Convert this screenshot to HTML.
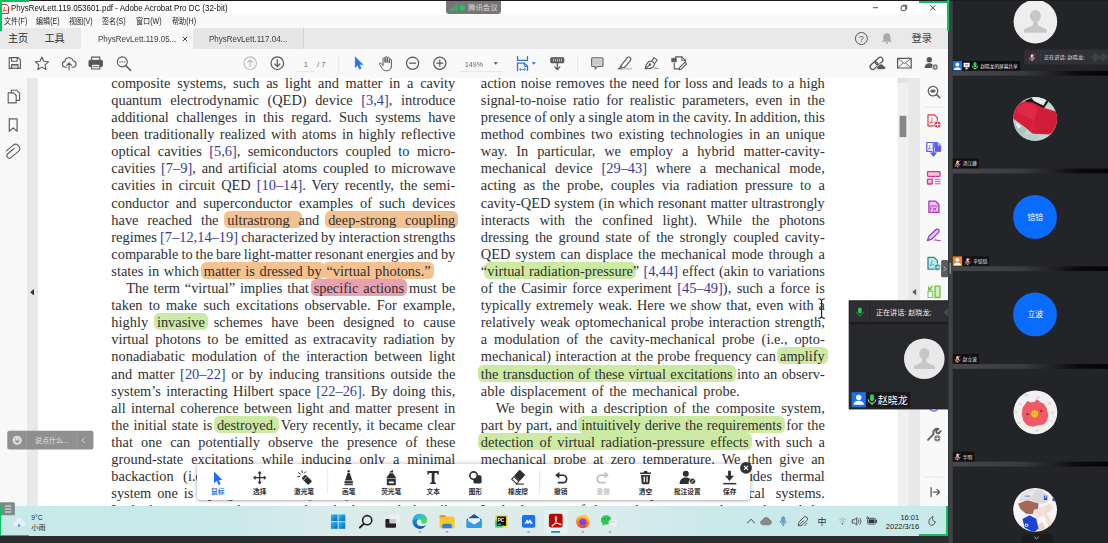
<!DOCTYPE html>
<html lang="zh"><head><meta charset="utf-8"><title>PhysRevLett.119.053601.pdf - Adobe Acrobat Pro DC (32-bit)</title>
<style>
*{box-sizing:border-box;margin:0;padding:0}
html,body{width:1108px;height:543px;overflow:hidden;background:#2b2c2f}
body{position:relative;font-family:"Liberation Sans","Noto Sans CJK SC",sans-serif;color:#222}
.abs{position:absolute}
#win{position:absolute;left:0;top:0;width:948px;height:543px;background:#fff;overflow:hidden}
#titlebar{position:absolute;left:0;top:1px;width:948px;height:27px;background:#fff}
#tabbar{position:absolute;left:0;top:28px;width:948px;height:21px;background:#e9e9e9}
#toolbar{position:absolute;left:0;top:49px;width:948px;height:29px;background:#f9f9f9}
#doc{position:absolute;left:0;top:78px;width:948px;height:429px;background:#e8e8e8;overflow:hidden}
#leftpane{position:absolute;left:0;top:0;width:27px;height:430px;background:#f8f8f8}
#page{position:absolute;left:38px;top:0;width:860px;height:430px;background:#fff}
#rightpane{position:absolute;left:919.5px;top:0;width:29px;height:430px;background:#f9f9f9}
#text{z-index:0;position:absolute;left:0;top:0;width:948px;height:506px;overflow:hidden;font-family:"Liberation Serif",serif;font-size:14.4px;color:#303030}
.ln{position:absolute;white-space:nowrap;line-height:17px;height:17px}
.ln .rf{color:#363a9a}
.h{position:relative;z-index:-1;border-radius:5.5px;padding:1.1px 3px 0;margin:0 -3px}
.ho{background:#f4c190}
.hg{background:#cdeaa4}
.hr{background:#e9a0b0}
#taskbar{position:absolute;left:0;top:506px;width:948px;height:29.500px;background:linear-gradient(90deg,#c8e9ea 0,#c9e9ea 24%,#dbebea 36%,#deeceb 50%,#dbebea 63%,#cae9ea 75%,#c8e9ea 100%)}
#bottom{position:absolute;left:0;top:535.500px;width:948.300px;height:8px;background:#2a2c2f}
#meet{position:absolute;left:950px;top:0;width:158px;height:543px;background:#2a2b2f}

#titlebar .ttl{position:absolute;left:10.6px;top:1.2px;transform-origin:0 50%;transform:scaleX(.866);font-size:9.2px;line-height:13px;color:#111;white-space:nowrap}
#menubar{position:absolute;left:0;top:14px;width:948px;height:14px;background:#f9f9f9;border-bottom:1px solid #e0e0e0}
#menubar span{position:absolute;top:0;transform-origin:0 50%;transform:scaleX(.855);font-size:8.3px;line-height:13px;color:#222;white-space:nowrap}
.topline{position:absolute;left:0;top:0;width:1108px;height:1px;background:#1d1d1f}
.g{background:#07c160;position:absolute}
#meetpill{position:absolute;left:446px;top:-.3px;width:55px;height:13.3px;background:#767676;border-radius:0 0 3px 3px}
#meetpill .t{position:absolute;left:22px;top:0;font-size:7.4px;line-height:13px;color:#d6d6d6;white-space:nowrap}
.wc{position:absolute;color:#333}
#tabbar .home{position:absolute;top:0;font-size:10.1px;line-height:21px;color:#2a2a2a}
#tab1{position:absolute;left:81px;top:0;width:112px;height:21px;background:#f9f9f9}
#tab2{position:absolute;left:193px;top:0;width:111px;height:21px;background:#e6e6e6;border-right:1px solid #d2d2d2}
.tabt{position:absolute;top:.7px;transform-origin:0 50%;transform:scaleX(.933);font-size:8.6px;line-height:21px;color:#3c3c3c;white-space:nowrap}
#login{position:absolute;left:911.5px;top:0;font-size:10.3px;line-height:21px;color:#444}
.tbt{position:absolute;top:8.500px;font-size:7.600px;line-height:13px;color:#666;white-space:nowrap}
</style></head><body>
<div id="win">
<div id="titlebar">
<svg class="abs" style="left:1px;top:2.5px" width="8" height="10" viewBox="0 0 8 10"><path d="M0.5 0.5h5l2 2v7h-7z" fill="#fff" stroke="#d4302b" stroke-width="1"/><path d="M1.8 7.2c1.2-1.5 1.8-3 1.8-4.2M1.8 7.2c1.5-.8 3-1 4.4-.8" stroke="#d4302b" stroke-width=".8" fill="none"/></svg>
<div class="ttl">PhysRevLett.119.053601.pdf - Adobe Acrobat Pro DC (32-bit)</div>
<div id="menubar"><span style="left:4.3px">文件(F)</span><span style="left:36.4px">编辑(E)</span><span style="left:69.3px">视图(V)</span><span style="left:102.2px">签名(S)</span><span style="left:135.6px">窗口(W)</span><span style="left:172.2px">帮助(H)</span></div>
<div id="meetpill"><svg class="abs" style="left:4px;top:3.2px" width="16" height="9" viewBox="0 0 16 9"><rect x=".3" y="4.700" width="1.700" height="2.500" fill="#1ec45c"/><rect x="2.800" y="3.200" width="1.700" height="4" fill="#1ec45c"/><rect x="5.300" y="1.300" width="1.900" height="5.900" fill="#1ec45c"/><circle cx="12" cy="4" r="2.800" fill="#1ec45c"/></svg><div class="t">腾讯会议</div></div>
<svg class="abs" style="left:870px;top:1px" width="70" height="12" viewBox="0 0 70 12"><path d="M3 5.7h5" stroke="#555" stroke-width="1"/><rect x="31.2" y="4" width="4.6" height="4.6" rx="1" fill="none" stroke="#444" stroke-width="1"/><path d="M32.5 3.2h4.2v4.2" fill="none" stroke="#444" stroke-width=".9"/><path d="M60.3 3.3l5 5M65.3 3.3l-5 5" stroke="#444" stroke-width="1"/></svg>
</div>
<div id="tabbar">
<div class="home" style="left:8px">主页</div><div class="home" style="left:44.5px">工具</div>
<div id="tab1"><div class="tabt" style="left:16.800px">PhysRevLett.119.05...</div><svg class="abs" style="left:101px;top:7.5px" width="6" height="6" viewBox="0 0 6 6"><path d="M.8.8l4.4 4.4M5.2.8L.8 5.2" stroke="#444" stroke-width="1"/></svg></div>
<div id="tab2"><div class="tabt" style="left:16px">PhysRevLett.117.04...</div></div>
<svg class="abs" style="left:853px;top:3px" width="42" height="16" viewBox="0 0 42 16"><circle cx="8.4" cy="7.5" r="6" fill="none" stroke="#555" stroke-width="1"/><text x="8.4" y="10.6" font-size="8.5" font-family="Liberation Sans, sans-serif" fill="#555" text-anchor="middle">?</text><path d="M33.9 2.2c-2.6 0-3.6 2-3.6 4.2v2.6l-1.3 1.8h9.8l-1.3-1.8V6.4c0-2.2-1-4.2-3.6-4.2z" fill="#aaa"/><circle cx="33.9" cy="12" r="1.1" fill="#aaa"/></svg>
<div id="login">登录</div>
</div>
<div id="toolbar"><svg class="abs" style="left:0;top:0" width="948" height="28" viewBox="0 49 948 28" fill="none" stroke="#585858" stroke-width="1.1" stroke-linejoin="round" stroke-linecap="round">
<!-- save -->
<path d="M9.2 57.6h9l2.2 2.2v8.6H9.2z"/><path d="M11.6 57.8v3.4h5.6v-3.4" /><path d="M11.6 68.2v-3.6h6.4v3.6" fill="#d0d0d0"/>
<!-- star -->
<path d="M41.9 57l1.9 4.3 4.7.5-3.5 3.1 1 4.6-4.1-2.4-4.1 2.4 1-4.6-3.5-3.100 4.7-.5z"/>
<!-- cloud upload -->
<path d="M66.300 67.2h-.8c-1.900 0-3.100-1.300-3.100-2.900 0-1.500 1.100-2.700 2.500-2.900.2-2.100 1.900-3.600 4.100-3.600 2 0 3.700 1.300 4.100 3.200 1.700.1 2.900 1.400 2.900 3 0 1.800-1.400 3.200-3.200 3.200h-.9"/><path d="M69.100 69.8v-6.600M66.700 65.300l2.400-2.400 2.400 2.400"/>
<!-- printer -->
<rect x="89" y="60.300" width="13.400" height="6.200" rx="1.200" fill="#585858"/><path d="M91.600 60v-2.900h8.200v2.900" /><rect x="91.600" y="64.200" width="8.200" height="4.800" fill="#f4f4f4"/><path d="M93.400 66.600h4.600" stroke-width=".8"/>
<!-- search -->
<circle cx="122.300" cy="61.900" r="5"/><path d="M126 65.700l4.600 4.700" stroke-width="1.500"/><path d="M120 61.900h.2M122.200 61.900h.2M124.400 61.900h.2" stroke-width="1.200"/>
<!-- up / down -->
<g stroke="#bdbdbd"><circle cx="250.200" cy="63.200" r="6.300"/><path d="M250.200 66.600v-6.600M247.600 62.400l2.600-2.600 2.600 2.600"/></g>
<g stroke-width="1.200"><circle cx="277.300" cy="63.200" r="6.300"/><path d="M277.300 59.800v6.600M274.700 64l2.600 2.600 2.600-2.600"/></g>
<!-- page number -->
<path d="M297 71.600h17.600" stroke="#e6e6e6" stroke-width="1"/>
<path d="M338.600 55v16.500M577.600 55v16.500" stroke="#e9e9e9" stroke-width="1"/>
<!-- cursor -->
<path d="M355.200 57.100v10.400l2.500-2.300 1.800 4 1.700-.8-1.800-3.900h3.400z" fill="#2873dc" stroke="#2873dc" stroke-width=".5"/>
<!-- hand -->
<path d="M383 65.200V58.800c0-1.400 2.100-1.400 2.100 0V62.600 57.600c0-1.400 2.100-1.400 2.100 0V62.600 58.200c0-1.400 2.100-1.400 2.100 0V63 60c0-1.400 2.100-1.400 2.100 0V66c0 3-1.800 4.800-4.700 4.800-2.200 0-3.400-.8-4.600-2.600l-2.500-3.800c-.7-1.100.7-2 1.500-1.100z" stroke-width="1"/>
<!-- minus / plus -->
<g stroke-width="1.200"><circle cx="412.600" cy="63.200" r="6.100"/><path d="M409.600 63.200h6"/><circle cx="439.800" cy="63.200" r="6.100"/><path d="M436.800 63.200h6M439.800 60.200v6"/></g>
<path d="M459 71.600h43.700" stroke="#e6e6e6" stroke-width="1"/>
<path d="M493.600 62.300h4.200l-2.100 2.500z" fill="#555" stroke="none"/>
<!-- fit page -->
<g stroke="#2a74d6" stroke-width="1.300"><path d="M517.500 56.400v4h10v-4"/><path d="M517.500 70.400v-7.300h6.800l3.200 3.200v4.100"/><path d="M524.300 63.100v3.200h3.200" stroke-width="1"/><path d="M519.600 69.500h5.800M520.600 68.500l-1 1 1 1M524.400 68.500l1 1-1 1" stroke-width=".8"/></g>
<path d="M531.600 62.300h4.400l-2.200 2.500z" fill="#2a74d6" stroke="none"/>
<!-- keyboard scroll -->
<rect x="550.800" y="57.700" width="13" height="4.900" rx="1" fill="#585858"/><path d="M553.400 59.100v2.100M555.400 59.100v2.100M557.400 59.100v2.100M559.400 59.100v2.100M561.400 59.100v2.100" stroke="#e8e8e8" stroke-width=".8"/><path d="M557.300 63v6.400M554.700 66.900l2.600 2.600 2.600-2.600" stroke-width="1.200"/>
<!-- comment -->
<path d="M592.600 57.700h9.400c.6 0 1 .4 1 1v6.800c0 .6-.4 1-1 1h-4.600l-2.300 2.700v-2.700h-2.500c-.6 0-1-.4-1-1v-6.800c0-.6.400-1 1-1z" fill="#d2d2d2" stroke="#666" stroke-width="1.100"/><path d="M594.500 61h6M594.500 63.200h6" stroke="#bdbdbd" stroke-width=".9"/>
<!-- highlighter -->
<path d="M620.600 66.100l6.600-8.200c.8-1 2.100-1.100 3-.3.900.8 1 2 .2 3l-6.600 7.700z" /><path d="M620.600 66.100l-1.600 2.400-1.200.4h3.600l2.400-.6" fill="#777" stroke="#666" stroke-width=".8"/><path d="M622.500 68.700h8.800" stroke="#c4c4c4" stroke-width="1.600"/>
<!-- sign pen -->
<path d="M645.200 68.700c.3-2.600 1.300-5.200 3.600-7.100l3.300-.6 2.500 3-1.300 3c-2.200 1.500-5 1.900-8.100 1.700z"/><path d="M645.400 68.500l4.300-3.600"/><circle cx="650" cy="64.600" r=".7"/><path d="M652 61l2.100-3.400 3.100 2.500-2.600 3.400"/><path d="M654.600 68.600c.6-1.200 1.200-1.200 1.500 0 .3-.8.800-.8 1.200 0h1" stroke-width=".7"/>
<!-- stamp -->
<path d="M675.500 58.200v-1.300h6.300l3.600 3.500v1.800"/><path d="M681.800 56.900v3.500h3.600" stroke-width=".9"/><rect x="671.800" y="58.300" width="4.600" height="3.600" fill="#585858" stroke-width=".6"/><path d="M674.300 63.300v5.600h4.400"/><path d="M679.600 67.600l5.400-5.400 1.600 1.600-5.400 5.400-2.100.5z"/>
<!-- link cloud -->
<g stroke-width="1.300" transform="rotate(-42 876.500 63.300)"><rect x="868.800" y="60.700" width="8.600" height="5.200" rx="2.600"/><rect x="875.600" y="60.700" width="8.600" height="5.200" rx="2.600"/></g>
<path d="M878.400 69.500c-1.200 0-1.900-.8-1.900-1.700 0-1 .8-1.700 1.700-1.800.3-1.300 1.300-2.100 2.700-2.100 1.300 0 2.400.8 2.700 2 1.200.1 2 .9 2 1.900 0 1-.8 1.700-2 1.700z" fill="#585858" stroke="#f9f9f9" stroke-width=".7"/>
<!-- mail -->
<rect x="897.600" y="58.400" width="13.600" height="9.600" stroke-width="1.200"/><path d="M897.800 58.600l6.600 5 6.600-5M897.800 67.800l5-4.600M911 67.800l-5-4.600" stroke-width=".8"/>
<!-- user plus -->
<circle cx="929.300" cy="59.800" r="2.700" fill="#585858" stroke="none"/><path d="M924.600 68c0-2.800 1.900-4.700 4.700-4.700 1.600 0 2.900.6 3.700 1.700l-.8 3z" fill="#585858" stroke="none"/><circle cx="935.200" cy="67.100" r="3" fill="#585858" stroke="#f9f9f9" stroke-width=".7"/><path d="M933.700 67.100h3M935.200 65.600v3" stroke="#f4f4f4" stroke-width=".8"/>
</svg>
<div class="tbt" style="left:303.800px">1</div><div class="tbt" style="left:317px">/ 7</div><div class="tbt" style="left:464.800px;transform-origin:0 50%;transform:scaleX(.92)">149%</div>
</div>
<div id="doc"><div id="leftpane"></div><div id="page"></div><div id="rightpane"></div></div>
<div id="text">
<div class="ln" style="left:111.3px;top:75.00px;word-spacing:3.140px">composite systems, such as light and matter in a cavity</div>
<div class="ln" style="left:111.3px;top:92.00px;word-spacing:4.944px">quantum electrodynamic (QED) device <span class="rf">[3,4]</span>, introduce</div>
<div class="ln" style="left:111.3px;top:109.00px;word-spacing:3.811px">additional challenges in this regard. Such systems have</div>
<div class="ln" style="left:111.3px;top:126.00px;word-spacing:1.930px">been traditionally realized with atoms in highly reflective</div>
<div class="ln" style="left:111.3px;top:143.00px;word-spacing:3.783px">optical cavities <span class="rf">[5,6]</span>, semiconductors coupled to micro-</div>
<div class="ln" style="left:111.3px;top:160.00px;word-spacing:2.217px">cavities <span class="rf">[7–9]</span>, and artificial atoms coupled to microwave</div>
<div class="ln" style="left:111.3px;top:177.00px;word-spacing:2.388px">cavities in circuit QED <span class="rf">[10–14]</span>. Very recently, the semi-</div>
<div class="ln" style="left:111.3px;top:195.00px;word-spacing:3.252px">conductor and superconductor examples of such devices</div>
<div class="ln" style="left:111.3px;top:212.00px;word-spacing:5.252px">have reached the <span class="h ho">ultrastrong </span>and <span class="h ho">deep-strong coupling</span></div>
<div class="ln" style="left:111.3px;top:229.00px;word-spacing:-0.415px">regimes <span class="rf">[7–12,14–19]</span> characterized by interaction strengths</div>
<div class="ln" style="left:111.3px;top:246.00px;word-spacing:-0.625px">comparable to the bare light-matter resonant energies and by</div>
<div class="ln" style="left:111.3px;top:263.00px;word-spacing:1.096px">states in which <span class="h ho">matter is dressed by</span> <span class="h ho">“virtual photons.”</span></div>
<div class="ln" style="left:126.3px;top:280.00px;word-spacing:1.262px">The term “virtual” implies that <span class="h hr">specific actions</span> must be</div>
<div class="ln" style="left:111.3px;top:297.00px;word-spacing:2.615px">taken to make such excitations observable. For example,</div>
<div class="ln" style="left:111.3px;top:314.00px;word-spacing:5.242px">highly <span class="h hg">invasive</span> schemes have been designed to cause</div>
<div class="ln" style="left:111.3px;top:331.00px;word-spacing:2.836px">virtual photons to be emitted as extracavity radiation by</div>
<div class="ln" style="left:111.3px;top:348.00px;word-spacing:2.983px">nonadiabatic modulation of the interaction between light</div>
<div class="ln" style="left:111.3px;top:366.00px;word-spacing:2.033px">and matter <span class="rf">[20–22]</span> or by inducing transitions outside the</div>
<div class="ln" style="left:111.3px;top:383.00px;word-spacing:1.693px">system’s interacting Hilbert space <span class="rf">[22–26]</span>. By doing this,</div>
<div class="ln" style="left:111.3px;top:400.00px;word-spacing:1.743px">all internal coherence between light and matter present in</div>
<div class="ln" style="left:111.3px;top:417.00px;word-spacing:1.015px">the initial state is <span class="h hg">destroyed.</span> Very recently, it became clear</div>
<div class="ln" style="left:111.3px;top:434.00px;word-spacing:4.640px">that one can potentially observe the presence of these</div>
<div class="ln" style="left:111.3px;top:451.00px;word-spacing:4.311px">ground-state excitations while inducing only a minimal</div>
<div class="ln" style="left:111.3px;top:468.00px;word-spacing:5.901px">backaction (i.e., a small change in the state) on the</div>
<div class="ln" style="left:111.3px;top:485.00px;word-spacing:2.265px">system one is trying to observe <span class="rf">[27,28]</span>. In this work we</div>
<div class="ln" style="left:111.3px;top:502.00px;word-spacing:0.510px">In the last two cases the proposed methods are rely heavily</div>
<div class="ln" style="left:480.8px;top:75.00px;word-spacing:1.154px">action noise removes the need for loss and leads to a high</div>
<div class="ln" style="left:480.8px;top:92.00px;word-spacing:3.132px">signal-to-noise ratio for realistic parameters, even in the</div>
<div class="ln" style="left:480.8px;top:109.00px;word-spacing:-0.289px">presence of only a single atom in the cavity. In addition, this</div>
<div class="ln" style="left:480.8px;top:126.00px;word-spacing:2.379px">method combines two existing technologies in an unique</div>
<div class="ln" style="left:480.8px;top:143.00px;word-spacing:5.274px">way. In particular, we employ a hybrid matter-cavity-</div>
<div class="ln" style="left:480.8px;top:160.00px;word-spacing:5.192px">mechanical device <span class="rf">[29–43]</span> where a mechanical mode,</div>
<div class="ln" style="left:480.8px;top:177.00px;word-spacing:3.590px">acting as the probe, couples via radiation pressure to a</div>
<div class="ln" style="left:480.8px;top:195.00px;word-spacing:0.447px">cavity-QED system (in which resonant matter ultrastrongly</div>
<div class="ln" style="left:480.8px;top:212.00px;word-spacing:6.248px">interacts with the confined light). While the photons</div>
<div class="ln" style="left:480.8px;top:229.00px;word-spacing:2.535px">dressing the ground state of the strongly coupled cavity-</div>
<div class="ln" style="left:480.8px;top:246.00px;word-spacing:1.539px">QED system can displace the mechanical mode through a</div>
<div class="ln" style="left:480.8px;top:263.00px;word-spacing:0.567px">“<span class="h hg">virtual radiation-pressure</span>” <span class="rf">[4,44]</span> effect (akin to variations</div>
<div class="ln" style="left:480.8px;top:280.00px;word-spacing:1.813px">of the Casimir force experiment <span class="rf">[45–49]</span>), such a force is</div>
<div class="ln" style="left:480.8px;top:297.00px;word-spacing:1.147px">typically extremely weak. Here we show that, even with a</div>
<div class="ln" style="left:480.8px;top:314.00px;word-spacing:1.187px">relatively weak optomechanical probe interaction strength,</div>
<div class="ln" style="left:480.8px;top:331.00px;word-spacing:3.245px">a modulation of the cavity-mechanical probe (i.e., opto-</div>
<div class="ln" style="left:480.8px;top:348.00px;word-spacing:0.566px">mechanical) interaction at the probe frequency can <span class="h hg">amplify</span></div>
<div class="ln" style="left:480.8px;top:366.00px;word-spacing:0.736px"><span class="h hg">the transduction of these virtual excitations</span> into an observ-</div>
<div class="ln" style="left:480.8px;top:383.00px;word-spacing:1.902px">able displacement of the mechanical probe.</div>
<div class="ln" style="left:495.8px;top:400.00px;word-spacing:2.653px">We begin with a description of the composite system,</div>
<div class="ln" style="left:480.8px;top:417.00px;word-spacing:0.657px">part by part, and <span class="h hg">intuitively derive the requirements</span> for the</div>
<div class="ln" style="left:480.8px;top:434.00px;word-spacing:2.312px"><span class="h hg">detection of virtual radiation-pressure effects</span> with such a</div>
<div class="ln" style="left:480.8px;top:451.00px;word-spacing:3.472px">mechanical probe at zero temperature. We then give an</div>
<div class="ln" style="left:480.8px;top:468.00px;word-spacing:5.240px">analysis of how the measured signal includes thermal</div>
<div class="ln" style="left:480.8px;top:485.00px;word-spacing:7.038px">noise in the matter, cavity and mechanical systems.</div>
<div class="ln" style="left:480.8px;top:502.00px;word-spacing:1.492px">In the last part of the work we present the results and the</div>
</div>
<svg class="abs" style="left:0;top:0" width="954" height="543" viewBox="0 0 954 543" fill="none" stroke="#5e5e5e" stroke-width="1.1" stroke-linejoin="round" stroke-linecap="round">
<!-- left pane icons -->
<path d="M11.400 92.800v-2.600h5.200l3 3v7.200h-3.400"/><path d="M8.200 92.900h5.400l2.600 2.600v7.400h-8z"/>
<path d="M9.300 118.900h7.800v12.300l-3.900-3.300-3.900 3.300z" stroke-width="1.200"/>
<g transform="rotate(-40 12.700 152.900)" stroke-width="1.100"><path d="M16.600 150.400h-8.200c-1.500 0-2.500 1.100-2.500 2.500s1 2.500 2.500 2.500h9.300c2.400 0 4.100-1.700 4.100-4.100s-1.700-4-4.100-4h-8.600"/></g>
<path d="M30.200 292.300l3.800-3.200v6.400z" fill="#333" stroke="none"/>
<!-- scrollbar -->
<rect x="897.600" y="78" width="10.900" height="428" fill="#f0f0f0" stroke="none"/>
<rect x="897.600" y="78" width="10.900" height="4.600" fill="#e2e2e2" stroke="none"/>
<rect x="899.600" y="115.800" width="6.700" height="21.300" fill="#858585" stroke="none"/>
<path d="M912.300 292.100l3.800-3.200v6.400z" fill="#555" stroke="none"/>
<!-- right pane -->
<circle cx="933" cy="91.100" r="4.800" stroke-width="1.200"/><path d="M936.500 94.600l3.300 3" stroke-width="1.500"/><path d="M930.300 91.100c1.600-1.900 3.800-1.900 5.400 0-1.600 1.900-3.800 1.900-5.400 0z" fill="#5e5e5e" stroke-width=".5"/>
<path d="M925.200 107h17.200M925.200 477.100h17.400" stroke="#e4e4e4" stroke-width="1"/>
<!-- red pdf plus -->
<g stroke="#d7373f"><path d="M928 114.800h6.400l3 3v8h-9.400z" stroke-width="1.200"/><path d="M930.400 123c1.200-1.500 1.800-3 1.800-4.600M930.400 123c1.500-.8 3-1 4.300-.8" stroke-width=".8"/><circle cx="937.500" cy="124.600" r="3.500" fill="#d7373f" stroke="#f9f9f9" stroke-width=".8"/><path d="M935.700 124.600h3.600M937.500 122.800v3.600" stroke="#fff" stroke-width="1"/></g>
<!-- export blue -->
<g stroke="#5c5ce0"><path d="M934.600 142.500h3.400l2.800 2.800v6h-6.200z" fill="#5c5ce0" stroke-width="1"/><path d="M938.200 142.300v2.800h2.800" stroke="#f9f9f9" stroke-width=".7"/><path d="M926.800 142.500h6.400v8.800h-6.400z" fill="#f9f9f9" stroke-width="1.200"/><path d="M928.600 149c.9-1.200 1.400-2.400 1.400-3.700M928.600 149c1.200-.6 2.300-.8 3.400-.6" stroke-width=".7"/><path d="M933.600 147.600v5.400" stroke="#f9f9f9" stroke-width="2.600" stroke-linecap="butt"/><path d="M933.600 147.800v5.400" stroke-width="1.400"/><path d="M930.600 152.800h6l-3 3.600z" fill="#5c5ce0" stroke-width=".6"/></g>
<!-- layout pink -->
<g stroke="#d83790" stroke-width="1.300"><rect x="927.500" y="171.700" width="12.500" height="4.600" rx=".8" fill="#f4c3dc"/><rect x="927.500" y="179.200" width="4.800" height="4.800" rx=".6" fill="#f4c3dc"/><path d="M935.400 179.400h4.800M935.400 181.600h4.800M935.400 183.800h4.800" stroke-width=".9"/></g>
<!-- purple doc -->
<g stroke="#b130bd" stroke-width="1.300"><path d="M928.900 201.100h6.600l3.400 3.400v7.800h-10z" fill="#ecc4f0"/><path d="M930.800 206h6.200M930.800 210v-2.300M933.200 208l2.800 2.400M936 208l-2.800 2.400" stroke-width="1"/></g>
<!-- purple pen -->
<g stroke="#8e3fd1" stroke-width="1.300"><path d="M927.400 240.600l1.600-4.300 6.800-6.600c.8-.8 2-.8 2.700 0 .7.800.7 1.900 0 2.700l-6.900 6.800z" fill="#e3cff5"/><path d="M934.400 240.600c.7-1.700 1.500-1.700 1.800 0 .4-1.200 1-1.200 1.500 0h2.600" stroke-width="1"/></g>
<!-- teal doc -->
<g stroke="#1d8f9c" stroke-width="1.300"><path d="M928 257.400h6.200l3.200 3.200v8.600h-9.400z" fill="#c4e6ea"/><path d="M930.200 265.400c1.200-1.500 1.800-3 1.800-4.600M930.200 265.400c1.400-.7 2.700-.9 3.900-.7" stroke-width=".7"/><circle cx="937.400" cy="267.200" r="3.300" fill="#1d8f9c" stroke="#f9f9f9" stroke-width=".7"/><path d="M935.600 267.200h3.400M937.800 265.900l1.300 1.300-1.300 1.300" stroke="#fff" stroke-width=".9"/></g>
<!-- collapse handle -->
<rect x="941.100" y="260.100" width="7.300" height="17.100" rx="1.500" fill="#5c5c5c" stroke="none"/><path d="M943.800 266.500l2.200 2.200-2.200 2.200" stroke="#bdbdbd" stroke-width="1"/>
<!-- green organize -->
<g stroke="#6fbf3b" stroke-width="1.300"><rect x="935" y="286.200" width="5" height="11.300" fill="#d5efc4"/><path d="M928 291.300h4.800v6.200h-4.800z" stroke-dasharray="1.400 1.100" stroke-width="1.100"/><path d="M932.400 286.300l-3.600 3.400M928.600 287v2.900h2.900" /></g>
<!-- purple circle -->
<circle cx="933.800" cy="407" r="4.200" stroke="#7a5af0" stroke-width="1.300"/>
<!-- wrench plus -->
<g><path d="M928 439.800l5.600-5.600c-.6-1.700-.2-3.300.9-4.400 1.100-1.100 2.600-1.400 3.900-.9l-2.300 2.300.5 1.800 1.800.5 2.300-2.300" stroke-width="1.800"/><circle cx="937.300" cy="438.400" r="3.300" fill="#5e5e5e" stroke="#f9f9f9" stroke-width=".7"/><path d="M935.600 438.400h3.400M937.300 436.700v3.400" stroke="#fff" stroke-width=".9"/></g>
<!-- arrow -->
<path d="M931.100 487.600v9M933 492.100h6.600M937 489.500l2.700 2.600-2.700 2.600" stroke-width="1.300"/>
</svg>

<div class="abs" style="left:196.500px;top:463.800px;width:553.500px;height:35.800px;background:#fff;border-radius:3px;box-shadow:0 0 5px rgba(0,0,0,.28),0 1px 2px rgba(0,0,0,.15)"></div>
<svg class="abs" style="left:190px;top:455px" width="570" height="52" viewBox="190 455 570 52" font-family="Liberation Sans, Noto Sans CJK SC, sans-serif" font-size="6.700" fill="#2e2f33" text-anchor="middle" font-weight="bold">
<!-- cursor -->
<path d="M214 471.600v11.600l2.700-2.400 2 4.300 2-.9-2-4.300h3.600z" fill="#1a6dff"/>
<text x="217.700" y="494.300" fill="#2f7de8">鼠标</text>
<!-- move -->
<g stroke="#2e2f33" stroke-width="1.300" fill="none"><path d="M259.700 472.600v10.200M254.600 477.700h10.200"/></g><path d="M259.700 471l2.200 2.600h-4.400zM259.700 484.400l2.200-2.600h-4.400zM253 477.700l2.600-2.200v4.400zM266.400 477.700l-2.600-2.200v4.400z"/>
<text x="259.700" y="494.300">选择</text>
<!-- laser -->
<g transform="rotate(-45 305.500 478.500)"><rect x="302.700" y="475.600" width="5.600" height="9.600" rx="1.200"/><path d="M302.700 478.200h5.600" stroke="#fff" stroke-width=".7"/></g>
<path d="M300.800 474.200l-2.600-1.600M302.400 473l-.6-2.600M300.200 476.300l-2.800.5M304.300 473.400l1.500-2" stroke="#2e2f33" stroke-width="1" fill="none"/>
<text x="304" y="494.300">激光笔</text>
<path d="M327.700 469.500v24.200M539.600 469.500v24.200" stroke="#e4e4e4" stroke-width=".9"/>
<!-- pen -->
<circle cx="348.700" cy="471.300" r="1.200"/><path d="M347.600 473h2.200l2.600 7.600h-7.400z"/><rect x="344.500" y="481.200" width="8.400" height="2.300"/><rect x="344.500" y="484.100" width="8.400" height="1.100"/>
<text x="348.700" y="494.300">画笔</text>
<!-- highlighter -->
<path d="M389.600 471.800l3.400-1.700v2.500h-3.400z"/><path d="M389.600 473.200h3.400l2.800 4v1.300h-9v-1.300z"/><path d="M386.800 479h9v6.300h-9zM388.800 481.400v1.900h5v-1.900z" fill-rule="evenodd"/>
<text x="391.200" y="494.300">荧光笔</text>
<!-- T -->
<path d="M427.400 471.100h11.400v3.400h-1.300l-.5-1.500h-2.500v9.300l1.500.4v1.200h-5.800v-1.200l1.500-.4v-9.300h-2.500l-.5 1.500h-1.300z"/>
<text x="433.200" y="494.300">文本</text>
<!-- shape -->
<rect x="473.400" y="475.300" width="8.200" height="8.100" rx="1.600"/><circle cx="473.600" cy="475.600" r="3.700" fill="#fff" stroke="#2e2f33" stroke-width="1.700"/>
<text x="475.500" y="494.300">图形</text>
<!-- eraser -->
<g transform="rotate(42 518.200 477)"><rect x="514.300" y="470.600" width="7.800" height="8.400" rx=".7"/><rect x="514.900" y="479.600" width="6.600" height="3.400" fill="#fff" stroke="#2e2f33" stroke-width="1.100"/></g><path d="M515.600 484.100h8.300" stroke="#2e2f33" stroke-width="1.100"/>
<text x="518" y="494.300">橡皮擦</text>
<!-- undo -->
<path d="M558.200 475.200h4.600c2.300 0 3.800 1.500 3.800 3.700s-1.500 3.700-3.800 3.700h-5" fill="none" stroke="#2e2f33" stroke-width="1.600"/><path d="M555.200 475.200l4.200-3.400v6.800z"/>
<text x="560.800" y="494.300">撤销</text>
<!-- redo -->
<g fill="#bdbdbd"><path d="M605.600 475.200h-4.600c-2.300 0-3.800 1.500-3.800 3.700s1.500 3.700 3.800 3.700h4.600" fill="none" stroke="#bdbdbd" stroke-width="1.600"/><path d="M608.800 475.200l-4.200-3.400v6.800z"/><text x="603.200" y="494.300" fill="#c4c4c4">重做</text></g>
<!-- trash -->
<path d="M640.200 472.400h3.400l.6-1.500h2.800l.6 1.500h3.400v1.700h-10.800z"/><path d="M641 474.900h9.200l-.7 8.200c-.1.700-.5 1.100-1.200 1.100h-5.400c-.7 0-1.100-.4-1.200-1.100zM643.600 476.600v5.600h1.300v-5.600zM646.400 476.600v5.600h1.300v-5.600z" fill-rule="evenodd"/>
<text x="645.500" y="494.300">清空</text>
<!-- person settings -->
<circle cx="685.800" cy="473.800" r="3"/><path d="M679.600 484c0-4.200 2.400-6.400 6.200-6.400 2 0 3.600.6 4.700 1.800-1.600 1-2.300 2.900-1.700 4.600z"/><circle cx="692.500" cy="481.200" r="2.900" stroke="#fff" stroke-width=".5"/><path d="M690.900 482.800l3.200-3.200" stroke="#fff" stroke-width=".9"/>
<text x="687.300" y="494.300">批注设置</text>
<!-- save -->
<path d="M728.100 470.800h2.800v5h3.100l-4.500 5.200-4.500-5.200h3.100z"/><rect x="723.200" y="482.900" width="13.100" height="1.500"/>
<text x="729.700" y="494.300">保存</text>
<!-- close -->
<circle cx="746" cy="467.900" r="5.900" fill="#303134"/><path d="M744 465.900l4 4M748 465.900l-4 4" stroke="#fff" stroke-width="1.200"/>
</svg>

<svg class="abs" style="left:0;top:0" width="950" height="543" viewBox="0 0 950 543" font-family="Liberation Sans, Noto Sans CJK SC, sans-serif">
<!-- chat pill -->
<rect x="7.300" y="430.800" width="86.100" height="18.800" rx="2" fill="#8b8b8b" fill-opacity=".96"/>
<circle cx="17.200" cy="440.300" r="4.600" fill="#dedede"/><path d="M14.600 440.600c.6 2.800 4.600 2.800 5.200 0z" fill="#8b8b8b"/><circle cx="15.600" cy="438.800" r=".6" fill="#8b8b8b"/><circle cx="18.800" cy="438.800" r=".6" fill="#8b8b8b"/>
<path d="M26.500 434v12.600M76.900 434v12.600" stroke="#a4a4a4" stroke-width=".7"/>
<text x="34.800" y="443" font-size="7.100" fill="#e2e2e2">说点什么...</text>
<path d="M84.800 437.600l-2.600 2.700 2.600 2.700" fill="none" stroke="#dcdcdc" stroke-width=".9"/>
<!-- speaker widget -->
<rect x="849.100" y="300.800" width="99.200" height="108.200" fill="#27282c"/>
<rect x="849.100" y="300.800" width="99.200" height="21.600" fill="#2d2e32"/>
<rect x="849.100" y="322.300" width="99.200" height="1.800" fill="#1a1b1d"/>
<rect x="849.100" y="300.800" width="99.200" height="108.200" fill="none" stroke="#1c1d1f" stroke-width=".8"/>
<path d="M869.900 301.500v20.500" stroke="#232427" stroke-width=".8"/>
<rect x="858.200" y="307.400" width="3.400" height="6" rx="1.700" fill="#2fcf4e"/><path d="M856.600 311.800c0 4.400 6.600 4.400 6.600 0M859.900 315.200v1.600" stroke="#3a8f4c" stroke-width=".9" fill="none"/>
<text x="875.900" y="315" font-size="7.100" fill="#f0f0f0">正在讲话: 赵晓龙;</text>
<path d="M948.300 307.600l-4.600 4.600 4.600 4.600z" fill="#4a4b50"/>
<circle cx="924.300" cy="358.700" r="20.300" fill="#e9e9e9"/>
<g fill="#c7c7c7" transform="translate(924.300 358.700) scale(.93) translate(-1035.400 -21.600)"><ellipse cx="1035.400" cy="16.100" rx="5.500" ry="6"/><path d="M1023.800 31.600c0-1.600.8-2.600 2.400-3.300l5.600-2.400c1-.5 1.300-1.200 1.300-2.400v-2h4.600v2c0 1.200.3 1.900 1.300 2.400l5.600 2.400c1.600.7 2.400 1.700 2.400 3.300 0 .7-.4 1.100-1.100 1.100h-21c-.7 0-1.100-.4-1.100-1.100z"/></g>
<rect x="851.500" y="392.200" width="58.600" height="15.100" fill="#1a1a1c"/>
<rect x="851.500" y="392.200" width="14.400" height="15.100" fill="#1a73e8"/>
<circle cx="858.700" cy="397.400" r="2.700" fill="#fff"/><path d="M853.600 404.800c0-5.400 10.200-5.400 10.200 0z" fill="#fff"/>
<rect x="870" y="394.200" width="4" height="7" rx="2" fill="#2fcf4e"/><path d="M868.200 399.400c0 5 7.600 5 7.600 0M872 403.200v1.800" stroke="#b8e8c0" stroke-width="1" fill="none"/>
<text x="877.800" y="403.500" font-size="10" fill="#fff">赵晓龙</text>
<!-- I-beam cursor -->
<path d="M690.400 305v25" stroke="#b0b0b0" stroke-width=".6"/>
<path d="M818.400 298.800c1.700 0 2.700.6 3.200 1.600.5-1 1.500-1.600 3.200-1.600M818.400 318.400c1.700 0 2.700-.6 3.200-1.600.5 1 1.500 1.600 3.200 1.600M821.600 300.200v16.800" fill="none" stroke="#111" stroke-width="1.100"/>
</svg>

<div id="taskbar"></div>
<svg class="abs" style="left:0;top:500px" width="948" height="43" viewBox="0 500 948 43" font-family="Liberation Sans, Noto Sans CJK SC, sans-serif">
<defs>
<linearGradient id="wing" x1="0" y1="0" x2="1" y2="1"><stop offset="0" stop-color="#2cc0f8"/><stop offset="1" stop-color="#0a64c8"/></linearGradient>
<linearGradient id="ffg" x1="0" y1="0" x2="0" y2="1"><stop offset="0" stop-color="#ffd43a"/><stop offset=".5" stop-color="#ff8a16"/><stop offset="1" stop-color="#f0393f"/></linearGradient>
<linearGradient id="edg" x1="0" y1="0" x2="1" y2="1"><stop offset="0" stop-color="#1f8ee0"/><stop offset="1" stop-color="#0b479a"/></linearGradient><linearGradient id="edt" x1="0" y1="0" x2="1" y2=".6"><stop offset="0" stop-color="#1f9fe0"/><stop offset=".5" stop-color="#2cc3c8"/><stop offset="1" stop-color="#58d855"/></linearGradient>
</defs>
<!-- bottom-left tab -->
<rect x="-2" y="502.300" width="16.900" height="12.900" rx="1.500" fill="#7e8b8d"/>
<path d="M5 506h6.200M5 509h6.200M5 512h6.200" stroke="#e6ecec" stroke-width="1"/>
<!-- weather -->
<path d="M15.600 526.400c-1.700 0-2.900-1.100-2.900-2.600 0-1.400 1-2.400 2.400-2.600.4-2 2-3.400 4.100-3.400 2 0 3.600 1.200 4.100 3 1.300.2 2.200 1.300 2.200 2.700 0 1.600-1.200 2.900-2.900 2.900z" fill="#e6f0f8" stroke="#c4d8e6" stroke-width=".4"/>
<path d="M19 523.400c.9 1.200 1.200 1.800 1.200 2.300 0 .7-.5 1.200-1.200 1.200s-1.200-.5-1.200-1.200c0-.5.300-1.100 1.200-2.300z" fill="#3a9af0"/>
<text x="31.300" y="519.600" font-size="7.600" fill="#222" textLength="11.400" lengthAdjust="spacingAndGlyphs">9°C</text>
<text x="31.300" y="530" font-size="7.200" fill="#222">小雨</text>
<!-- windows -->
<g fill="url(#wing)"><rect x="330.900" y="514.500" width="6.700" height="6.700"/><rect x="338.500" y="514.500" width="6.700" height="6.700"/><rect x="330.900" y="522.100" width="6.700" height="6.700"/><rect x="338.500" y="522.100" width="6.700" height="6.700"/></g>
<!-- search -->
<circle cx="367.200" cy="520.200" r="4.600" fill="none" stroke="#222" stroke-width="1.600"/><path d="M363.800 523.800l-3.900 3.700" stroke="#222" stroke-width="1.900" stroke-linecap="round"/>
<!-- task view -->
<rect x="385.400" y="519" width="10.600" height="8.700" rx="1" fill="#222"/><rect x="389.300" y="514.400" width="10.500" height="9" rx="1" fill="#f0f0f0" fill-opacity=".82"/>
<!-- edge -->
<g transform="translate(405 508) scale(.054140)">
<path d="M138 250C135 170 195 105 275 105 360 105 415 165 410 230 407 272 375 295 335 292 305 288 295 268 305 248 312 232 300 212 268 212 235 212 212 238 214 268z" fill="url(#edt)"/>
<path d="M138 250C150 215 195 200 235 212 215 232 210 262 224 295 245 335 300 352 385 318 360 365 310 390 262 385 190 378 140 320 138 250z" fill="url(#edg)"/>
</g>
<!-- explorer -->
<path d="M439.600 516.400c0-.8.500-1.400 1.300-1.400h3.800l1.400 1.500h7.100c.8 0 1.300.6 1.300 1.400v9c0 .8-.5 1.300-1.300 1.300h-12.300c-.8 0-1.300-.5-1.300-1.300z" fill="#f8c62e"/><path d="M439.600 516.400c0-.8.500-1.400 1.300-1.400h3.800l1.400 1.500-1.200 1h-5.300z" fill="#e59d1e"/><path d="M442.200 528.200v-2.400c0-1.200.8-2 2-2h5.600c1.200 0 2 .8 2 2v2.400z" fill="#2c7ed6"/>
<!-- mail -->
<path d="M466.600 519.600l7.500-5.400 7.500 5.400v7.100c0 .6-.4 1-1 1h-13c-.6 0-1-.4-1-1z" fill="#1f8fe6"/><path d="M466.600 519.600l7.500-5.400 7.500 5.400-7.500 4.200z" fill="#0d55aa"/><path d="M468 518.200h12.200v3l-6.100 3.600-6.100-3.600z" fill="#eaf4fc"/><path d="M466.600 520l7.500 4.700 7.500-4.700v6.700c0 .6-.4 1-1 1h-13c-.6 0-1-.4-1-1z" fill="#2a9df0"/>
<!-- pycharm -->
<rect x="495.200" y="514.900" width="12.600" height="12.600" fill="#e6ea3c"/><path d="M495.200 527.500v-8l8 8z" fill="#34d27a"/><rect x="496.900" y="516.500" width="9.200" height="9.200" fill="#0c0c0c"/><text x="497.700" y="521.600" font-size="4.600" font-weight="bold" fill="#fff">PC</text><path d="M497.900 524.200h3.200" stroke="#fff" stroke-width=".7"/>
<!-- tencent meeting -->
<rect x="521.900" y="514.900" width="13.300" height="12.800" rx="2" fill="#1a72f2"/><path d="M524.400 523.800l2.600-4.200 1.400 1.700 1.300-2 3.200 4.500h-2.400l-1-1.500-.9 1.500h-1.700l-.7-1.200-.7 1.200z" fill="#fff"/>
<!-- acrobat -->
<rect x="544.300" y="510.100" width="23.100" height="23.100" rx="2.500" fill="#e6f3f4" fill-opacity=".85"/>
<rect x="548.900" y="513.700" width="13.700" height="13.700" rx="2.200" fill="#b30b00"/>
<path d="M555.800 516.300c-.9.100-.8 2.500.2 4.600 1 2 3 3.700 4.700 4.100.9.200 1-.7.100-1.100-2.900-1.100-6.900-.3-8.700 1.400-.7.700.1 1.300.8.600 1.600-1.700 3-4.100 3.600-6.400.5-1.900.2-3.300-.7-3.200z" fill="none" stroke="#fff" stroke-width=".9" stroke-linejoin="round"/>
<rect x="551" y="531" width="9.100" height="1.800" rx=".9" fill="#1f8a9c"/>
<!-- firefox -->
<circle cx="582.800" cy="521.600" r="6.700" fill="url(#ffg)"/><path d="M578 515.800c.8.200 1.300.8 1.500 1.400 1-.9 2.400-1.300 3.700-1.100 1.300-1.700 3.300-1.600 3.300-1.600-.4.900-.2 1.800.5 2.600 1.600 1.400 2.500 3.200 2.500 4.900" fill="#ffc22e"/><circle cx="582.900" cy="521.600" r="3.600" fill="#7a3fe8"/><path d="M579.600 520c.8-1.100 2-1.700 3.200-1.700 2.200 0 3.800 1.600 3.800 3.600" fill="none" stroke="#ff7139" stroke-width="1.200"/>
<!-- wechat -->
<ellipse cx="606.200" cy="520" rx="5.400" ry="4.700" fill="#2dc84e"/><path d="M603 523.600l-.8 2.400 2.800-1.400z" fill="#2dc84e"/><ellipse cx="612.900" cy="522.600" rx="4.300" ry="3.700" fill="#eef2ee"/><path d="M615 525.600l.8 1.800-2.400-1.100z" fill="#eef2ee"/><circle cx="604.400" cy="518.800" r=".7" fill="#1a9a38"/><circle cx="608" cy="518.800" r=".7" fill="#1a9a38"/><circle cx="611.600" cy="521.800" r=".55" fill="#999"/><circle cx="614.300" cy="521.800" r=".55" fill="#999"/>
<!-- indicators -->
<g fill="#8a9698"><rect x="418.600" y="531.200" width="2.700" height="1.300" rx=".6"/><rect x="445.700" y="531.200" width="2.700" height="1.300" rx=".6"/><rect x="527.200" y="531.200" width="2.700" height="1.300" rx=".6"/><rect x="581.500" y="531.200" width="2.700" height="1.300" rx=".6"/><rect x="608.700" y="531.200" width="2.700" height="1.300" rx=".6"/></g>
<!-- tray -->
<g fill="none" stroke="#444" stroke-width="1" stroke-linecap="round" stroke-linejoin="round">
<path d="M747.400 523l3.600-3.800 3.600 3.800"/>
<path d="M763 524.800c-1.400 0-2.400-.9-2.400-2.200 0-1.200.9-2.100 2.100-2.200.4-1.700 1.700-2.800 3.500-2.800 1.700 0 3 1 3.400 2.500 1.100.2 1.800 1 1.800 2.200 0 1.400-1 2.500-2.400 2.500z" fill="#8a8a8a" stroke="#6a6a6a" stroke-width=".7"/>
<rect x="781.700" y="516.800" width="3" height="5.800" rx="1.500" fill="#6aa2c8" stroke="#4a86b0" stroke-width=".7"/><path d="M780.200 521.200c0 4 6 4 6 0M783.200 524.300v1.800" stroke="#4a86b0" stroke-width=".9"/>
<path d="M798.600 525.600c-.6-1.700-.1-3 1.100-4.300l3.900-3.900c1-1 2.400-1 3.300-.1.900.9.800 2.200-.1 3.200l-4 4c-1.200 1.200-2.600 1.600-4.200 1.100z" stroke-width="1"/><path d="M799.800 524.400l3.600-3.600M804.600 525.400c.8-.3 1.500-.9 2.300-2" stroke-width=".9"/>
<path d="M839.300 520.100c1.900-1.900 4.500-1.900 6.400 0M840.600 521.800c1.100-1.100 2.700-1.100 3.800 0" stroke="#9aa4a6" stroke-width=".9"/><circle cx="842.500" cy="523.800" r=".8" fill="#555" stroke="none"/>
<path d="M852.600 519.800h1.800l2.400-2.100v7.400l-2.400-2.100h-1.800z" stroke-width=".9"/><path d="M858.200 519.600c.8.900.8 2.700 0 3.600M859.800 518.200c1.500 1.700 1.500 4.700 0 6.400" stroke-width=".8"/>
<rect x="867.600" y="518.300" width="8" height="5.800" rx="1" stroke-width=".9"/><rect x="868.700" y="519.400" width="5.800" height="3.600" fill="#333" stroke="none"/><path d="M876.400 520.200v2" stroke-width="1.100"/><path d="M868.400 517.400l-1.400-.7v1.900" stroke-width=".8"/>
<path d="M932.800 516.800c-2.500.9-3.900 2.800-3.900 5 0 1.400.6 2.600 1.600 3.400 2.400.5 4.600-1.200 4.800-3.600-2 .3-3.400-1.600-2.500-4.800z" stroke-width=".9"/>
</g>
<text x="821.900" y="524.700" font-size="9" fill="#333" text-anchor="middle">中</text>
<text x="919.200" y="519.700" font-size="7.500" fill="#222" text-anchor="end">16:01</text>
<text x="919.200" y="529.200" font-size="7.500" fill="#222" text-anchor="end">2022/3/16</text>
</svg>

</div>
<svg class="abs" style="left:948px;top:0" width="160" height="543" viewBox="948 0 160 543" font-family="Liberation Sans, Noto Sans CJK SC, sans-serif">
<defs>
<linearGradient id="sepg" x1="0" x2="1" y1="0" y2="0"><stop offset="0" stop-color="#45474a"/><stop offset=".45" stop-color="#3a3b3e"/><stop offset=".8" stop-color="#0c0c0d"/><stop offset="1" stop-color="#050505"/></linearGradient>
<filter id="bl" x="-5%" y="-5%" width="110%" height="110%"><feGaussianBlur stdDeviation="4"/></filter>
<clipPath id="c2"><circle cx="1035.100" cy="119" r="21.900"/></clipPath>
<clipPath id="c5"><circle cx="1035.400" cy="412.300" r="21.900"/></clipPath>
<clipPath id="c6"><circle cx="1035.100" cy="509.800" r="21.900"/></clipPath>
<g id="mutemic"><rect x="-1.300" y="-3.200" width="2.600" height="4.600" rx="1.300" fill="#d8d8d8"/><path d="M-2.400 .2c0 3.200 4.800 3.200 4.800 0M0 2.600v1.200" stroke="#d8d8d8" stroke-width=".7" fill="none"/><path d="M-2.800 3.400l5.600-6.600" stroke="#e0443e" stroke-width="1"/></g>
<g id="onmic"><rect x="-1.500" y="-3.600" width="3" height="5.200" rx="1.500" fill="#2fcf4e"/><path d="M-2.700 .2c0 3.600 5.400 3.600 5.400 0M0 2.900v1.100" stroke="#b8e8c0" stroke-width=".8" fill="none"/></g>
<g id="pers"><circle cx="0" cy="-1.700" r="1.900" fill="#fff"/><path d="M-3.500 3.800c0-3.800 7-3.800 7 0z" fill="#fff"/></g>
</defs>
<rect x="948" y="0" width="160" height="543" fill="#232427"/>
<rect x="948.300" y="0" width="4.500" height="543" fill="#3f4144"/>
<!-- separators -->
<rect x="952.800" y="70.900" width="155.200" height="4.800" fill="url(#sepg)"/>
<rect x="952.800" y="168.600" width="155.200" height="4.800" fill="url(#sepg)"/>
<rect x="952.800" y="266.300" width="155.200" height="4.800" fill="url(#sepg)"/>
<rect x="952.800" y="364" width="155.200" height="4.800" fill="url(#sepg)"/>
<rect x="952.800" y="461.700" width="155.200" height="4.800" fill="url(#sepg)"/>
<!-- tile 1 -->
<circle cx="1035.400" cy="21.600" r="21.800" fill="#eeeeee"/>
<g id="sil" fill="#c7c7c7"><ellipse cx="1035.400" cy="16.100" rx="5.500" ry="6"/><path d="M1023.800 31.600c0-1.600.8-2.600 2.400-3.300l5.600-2.400c1-.5 1.300-1.200 1.300-2.400v-2h4.600v2c0 1.200.3 1.900 1.300 2.400l5.600 2.400c1.600.7 2.400 1.700 2.400 3.300 0 .7-.4 1.100-1.100 1.100h-21c-.7 0-1.100-.4-1.100-1.100z"/></g>
<rect x="952.800" y="61.100" width="67.200" height="9.400" fill="#0d0d0f"/>
<rect x="952.800" y="61.100" width="9.300" height="9.400" fill="#1a73e8"/><use href="#pers" x="957.400" y="66.200"/>
<rect x="963.600" y="62.700" width="6" height="4.600" rx=".5" fill="#f4f4f4"/><path d="M965 68.800h3.200M966.600 67.300v1.500" stroke="#f4f4f4" stroke-width=".9"/><path d="M965.200 65h2.800" stroke="#333" stroke-width=".8"/>
<use href="#onmic" x="975" y="65.600"/>
<text x="980.400" y="67.600" font-size="4.650" fill="#f0f0f0" textLength="37.300" lengthAdjust="spacingAndGlyphs">赵晓龙的屏幕共享</text>
<!-- tooltip -->
<rect x="1024.200" y="49.400" width="90" height="15.100" rx="2.500" fill="#303135"/>
<use href="#mutemic" x="1032.100" y="57.400"/>
<path d="M1040.400 51v12" stroke="#3c3d41" stroke-width=".8"/>
<text x="1043.900" y="59.200" font-size="4.650" fill="#e4e4e4" textLength="40.700" lengthAdjust="spacingAndGlyphs">正在讲话: 赵晓龙;</text>
<path d="M1091 57.300l4.600-4.600 4.600 4.600-4.600 4.600zM1098.600 57.300l4.600-4.600 4.600 4.600-4.600 4.600z" fill="#3f4044"/>
<!-- tile 2: red cap -->
<g clip-path="url(#c2)"><rect x="1010" y="95" width="50" height="50" fill="#c3d6d0"/>
<g transform="translate(1005 90) scale(.11050)" filter="url(#bl)">
<ellipse cx="300" cy="92" rx="75" ry="38" fill="#e4ece8"/>
<path d="M170 102L240 72 262 100 348 142 378 88 398 98 352 168 236 118z" fill="#17181a"/>
<path d="M420 120L480 200 470 140z" fill="#bcd2cc"/>
<path d="M108 138L160 104 252 114 330 156 480 198 480 340 402 402 250 397 200 352 70 255 88 180z" fill="#da1f3d"/>
<path d="M120 150L170 120 240 130 300 170 260 280 200 240 110 200z" fill="#df2a47"/>
<path d="M300 170L470 215 470 330 400 395 290 380 270 290z" fill="#d01a38"/>
<path d="M70 262L200 352 170 400 100 380z" fill="#a9c3c1"/>
<path d="M80 275L150 330 120 350z" fill="#e8efee"/>
<path d="M130 395L250 397 330 410 260 460 160 440z" fill="#b7cdc6"/>
</g></g>
<rect x="952.800" y="158.500" width="26" height="9.800" fill="#101012"/><use href="#mutemic" x="957.600" y="163.600"/>
<text x="962.800" y="165.400" font-size="4.700" fill="#f0f0f0">汤江峰</text>
<!-- tile 3 -->
<circle cx="1035" cy="217" r="21.900" fill="#0a6cff"/>
<text x="1035.300" y="219.800" font-size="7.800" fill="#fff" text-anchor="middle">锫锫</text>
<rect x="952.800" y="256.400" width="36.200" height="9.600" fill="#101012"/>
<rect x="952.800" y="256.400" width="9.300" height="9.600" fill="#f5821f"/><use href="#pers" x="957.400" y="261.500"/>
<use href="#mutemic" x="967.700" y="261.400"/>
<text x="973.300" y="263.200" font-size="4.700" fill="#f0f0f0">辛锫锫</text>
<!-- tile 4 -->
<circle cx="1035" cy="314.400" r="21.900" fill="#0a6cff"/>
<text x="1035.300" y="317.200" font-size="7.800" fill="#fff" text-anchor="middle">立波</text>
<rect x="952.800" y="354" width="26" height="9.800" fill="#101012"/><use href="#mutemic" x="957.600" y="359.100"/>
<text x="962.800" y="360.900" font-size="4.700" fill="#f0f0f0">赵立波</text>
<!-- tile 5: pig -->
<g clip-path="url(#c5)"><rect x="1010" y="388" width="50" height="50" fill="#f1f1f1"/>
<g transform="translate(1005 382) scale(.11050)" filter="url(#bl)">
<g fill="#dddddd"><ellipse cx="195" cy="120" rx="22" ry="13"/><ellipse cx="300" cy="140" rx="18" ry="11"/><ellipse cx="400" cy="195" rx="20" ry="13"/><ellipse cx="430" cy="275" rx="18" ry="12"/><ellipse cx="100" cy="270" rx="16" ry="12"/><ellipse cx="135" cy="200" rx="16" ry="11"/><ellipse cx="290" cy="440" rx="22" ry="12"/><ellipse cx="420" cy="350" rx="16" ry="11"/><ellipse cx="130" cy="370" rx="16" ry="11"/></g>
<path d="M190 190L203 172 232 186 268 178 290 156 318 180 352 196 378 240 392 300 380 350 352 384 300 392 250 404 200 392 165 350 152 290 160 230z" fill="#f05a66"/>
<circle cx="268" cy="288" r="33" fill="#f6c81c" stroke="#d99a12" stroke-width="7"/><path d="M258 274v26M280 274v26" stroke="#c78a10" stroke-width="6"/>
<circle cx="203" cy="291" r="11" fill="#b21d30"/><circle cx="328" cy="262" r="11" fill="#b21d30"/>
</g></g>
<rect x="952.800" y="451.700" width="21.600" height="9.800" fill="#101012"/><use href="#mutemic" x="957.600" y="456.800"/>
<text x="962.800" y="458.600" font-size="4.700" fill="#f0f0f0">半明</text>
<!-- tile 6: anime -->
<g clip-path="url(#c6)"><rect x="1010" y="485" width="50" height="50" fill="#f7f5f8"/>
<g transform="translate(1005 480) scale(.11050)" filter="url(#bl)">
<path d="M255 235L345 245 350 320 300 345 250 310z" fill="#f6dfd4"/>
<path d="M118 215L200 180 305 212 296 262 262 268 250 310 190 305 140 262z" fill="#a3685a"/>
<path d="M128 190L150 128 230 84 330 88 388 140 386 200 330 218 232 184z" fill="#d9d8dc"/>
<path d="M150 140L230 95 290 96 240 150 160 175z" fill="#e8e7ea"/>
<path d="M352 140h12v22h10v-22h8v40h-30z" fill="#2c4fb8"/>
<path d="M178 140h50v12h-50z" fill="#8d9cc4"/>
<path d="M345 240L400 215 440 245 420 270 380 300 430 400 400 430 350 310z" fill="#f3ddd0"/>
<path d="M300 400L340 380 360 430 330 470 300 460z" fill="#efd3c6"/>
<path d="M158 352L222 320 282 350 304 440 262 474 178 432z" fill="#1f40d2"/>
<circle cx="195" cy="410" r="16" fill="#e8eaf6"/><circle cx="195" cy="410" r="8" fill="#1f40d2"/>
<circle cx="442" cy="178" r="14" fill="#2340c8"/>
</g></g>
<rect x="1021.600" y="534.100" width="31.400" height="9" fill="#1b1c1e"/><path d="M1034.400 536.800l2.100 2 2.100-2" fill="none" stroke="#c8c8c8" stroke-width=".9"/>
<!-- drag handle -->
<path d="M950.200 263v10.800" stroke="#a8a8a8" stroke-width="1.100"/>
</svg>

<div class="topline"></div>
<div class="g" style="left:0;top:506px;width:1.200px;height:29.600px"></div><div class="g" style="left:0;top:534.600px;width:28.800px;height:1.200px"></div><div class="g" style="left:946.400px;top:506px;width:1.900px;height:29.600px"></div><div class="g" style="left:919.100px;top:534.400px;width:29px;height:1.300px"></div>
<div class="g" style="left:0;top:0;width:29px;height:2px"></div><div class="g" style="left:0;top:0;width:1.5px;height:31px"></div><div class="g" style="left:919px;top:1px;width:29.5px;height:1.7px"></div><div class="g" style="left:946.5px;top:0;width:2px;height:31px"></div>
<div id="bottom"></div>
</body></html>
